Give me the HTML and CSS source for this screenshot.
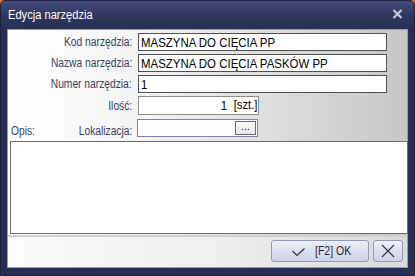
FILE: index.html
```html
<!DOCTYPE html>
<html>
<head>
<meta charset="utf-8">
<link rel="stylesheet" href="styles.css">
</head>
<body>
<div class="window">
  <div class="titlebar">
    <span class="title n">Edycja narzędzia</span>
    <svg class="close" width="11" height="10" viewBox="0 0 11 10"><path d="M1.5 1 L9.5 9 M9.5 1 L1.5 9" stroke="#c4c9de" stroke-width="2.2"/></svg>
  </div>
  <div class="client">
    <div class="form">
      <div class="row">
        <div class="label"><span class="n r">Kod narzędzia:</span></div>
        <div class="edit wide"><span class="n l">MASZYNA DO CIĘCIA PP</span></div>
      </div>
      <div class="row">
        <div class="label"><span class="n r">Nazwa narzędzia:</span></div>
        <div class="edit wide"><span class="n l">MASZYNA DO CIĘCIA PASKÓW PP</span></div>
      </div>
      <div class="row">
        <div class="label"><span class="n r">Numer narzędzia:</span></div>
        <div class="edit wide"><span class="n l">1</span></div>
      </div>
      <div class="row tall">
        <div class="label"><span class="n r">Ilość:</span></div>
        <div class="edit qty"><span class="n r">1</span><span class="unit n r">[szt.]</span></div>
      </div>
      <div class="row">
        <div class="label split"><span class="n l">Opis:</span><span class="n r">Lokalizacja:</span></div>
        <div class="edit loc"><span class="dots">...</span></div>
      </div>
      <div class="memo"></div>
    </div>
    <div class="footer">
      <div class="btn ok">
        <svg width="13" height="8" viewBox="0 0 13 8"><path d="M0.5 3 L5 7.5 L12.5 0.5" fill="none" stroke="#2c3044" stroke-width="1.1"/></svg>
        <span class="btxt n l">[F2] OK</span>
      </div>
      <div class="btn cancel">
        <svg width="14" height="14" viewBox="0 0 14 14"><path d="M1 1 L13 13 M13 1 L1 13" stroke="#2c3044" stroke-width="1.1"/></svg>
      </div>
    </div>
  </div>
</div>
</body>
</html>
```

FILE: styles.css
```css
* { box-sizing: border-box; }
html, body { margin: 0; padding: 0; }
body {
  width: 415px;
  height: 276px;
  background: #d9772c;
  font-family: "Liberation Sans", Arial, sans-serif;
  overflow: hidden;
}
.n { display: inline-block; white-space: nowrap; }
.n.l { transform-origin: left center; }
.n.r { transform-origin: right center; }
.window {
  width: 415px;
  height: 276px;
  background: #272e55;
  border-radius: 5px 5px 0 0;
  display: flex;
  flex-direction: column;
  border: 1px solid #1c2140;
}
.titlebar {
  height: 28px;
  display: flex;
  align-items: center;
  justify-content: space-between;
  padding: 0 11px 0 7px;
  background: linear-gradient(#434c7c, #2d355e 55%, #283056);
  border-radius: 4px 4px 0 0;
}
.title {
  color: #ffffff;
  font-size: 12.5px;
  transform: scaleX(0.89);
  transform-origin: left center;
  margin-top: -1px;
}
.close { margin-top: -2px; }
.client {
  margin: 0 6px 7px 6px;
  flex: 1;
  display: flex;
  flex-direction: column;
  border: 1px solid #9a9ca8;
}
.form {
  flex: 1;
  background: linear-gradient(to right, #ffffff, #f3f3f3 35%, #c6c6c6);
  padding: 3px 1px 1px 1px;
  display: flex;
  flex-direction: column;
}
.row {
  display: flex;
  align-items: center;
  height: 18px;
  margin-bottom: 3px;
}
.row.tall { height: 19px; margin-bottom: 4px; }
.label {
  width: 124px;
  text-align: right;
  font-size: 12.5px;
  color: #3a3e62;
  padding-right: 1px;
}
.label .n { transform: scaleX(0.82); }
.label.split {
  display: flex;
  justify-content: space-between;
  padding-left: 2px;
  padding-top: 6px;
}
.edit {
  margin-left: 5px;
  height: 100%;
  background: #ffffff;
  border: 1px solid #505050;
  font-size: 13px;
  color: #000;
  display: flex;
  align-items: center;
  padding-left: 2px;
  line-height: 1;
}
.edit .n { transform: scaleX(0.88); }
.edit.wide { width: 249px; }
.edit.qty {
  width: 121px;
  margin-left: 5px;
  border-color: #8c8c8c;
  justify-content: flex-end;
  padding-right: 1px;
  gap: 3px;
}
.edit.qty .unit { font-size: 12.5px; transform: scaleX(0.9); }
.edit.loc {
  width: 121px;
  margin-left: 4px;
  border: 1px solid #7c82b0;
  justify-content: flex-end;
  padding: 1px;
}
.dots {
  width: 21px;
  height: 100%;
  border: 1px solid #6c6c6c;
  background: linear-gradient(#fafafa, #e6e6e6);
  font-size: 11px;
  display: flex;
  align-items: center;
  justify-content: center;
  padding-bottom: 3px;
  color: #202020;
}
.memo {
  margin: 1px 0 0 1px;
  width: 398px;
  flex: 1;
  background: #fff;
  border: 1px solid #6a6a6a;
}
.footer {
  height: 32px;
  border-top: 2px solid #d0d0d0;
  background: linear-gradient(to right, #fbfbfb, #efefef 50%, #dadada);
  display: flex;
  justify-content: flex-end;
  align-items: flex-start;
  padding: 3px 4px 0 0;
  gap: 4px;
}
.btn {
  height: 22px;
  border: 1px solid #9299bb;
  border-radius: 3px;
  background: linear-gradient(#eef0f7, #d9deec 60%, #cfd5e7);
  display: flex;
  align-items: center;
  justify-content: center;
  font-size: 12.5px;
  color: #23263a;
}
.btn.ok { width: 98px; padding-left: 20px; justify-content: flex-start; gap: 10px; }
.btn.ok svg { margin-top: 2px; }
.btxt { transform: scaleX(0.84); }
.btn.cancel { width: 30px; }
```
